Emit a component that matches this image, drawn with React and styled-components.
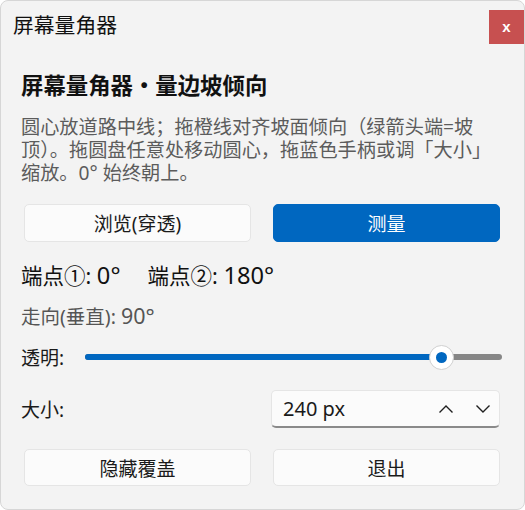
import React from "react";
import styled, { createGlobalStyle } from "styled-components";

const Global = createGlobalStyle`
  html, body { margin: 0; padding: 0; background: #ffffff; }
  body { font-family: "Noto Sans", "Noto Sans CJK SC", sans-serif; }
  * { box-sizing: border-box; }
`;

const Window = styled.div`
  width: 525px;
  height: 510px;
  background: #f3f3f3;
  border: 1px solid #d6d6d6;
  border-radius: 8px;
  display: flex;
  flex-direction: column;
  overflow: hidden;
  color: #1a1a1a;
`;

const TitleBar = styled.div`
  display: flex;
  align-items: flex-start;
  justify-content: space-between;
  padding: 9px 0 0 12px;
  height: 44px;
`;

const TitleText = styled.div`
  font-size: 20.8px;
  line-height: 28px;
  color: #111;
  font-family: "Noto Sans CJK SC", sans-serif;
`;

const CloseButton = styled.div`
  width: 35px;
  height: 34px;
  background: #c75050;
  color: #fff;
  display: flex;
  align-items: center;
  justify-content: center;
  font-family: "Liberation Sans", sans-serif;
  font-weight: bold;
  font-size: 15px;
  line-height: 1;
  padding-bottom: 2px;
`;

const Content = styled.div`
  display: flex;
  flex-direction: column;
  padding: 0 20px;
`;

const Heading = styled.div`
  margin-top: 26px;
  font-size: 22.4px;
  line-height: 30px;
  font-weight: bold;
  color: #111;
`;

const Description = styled.div`
  margin-top: 14px;
  font-size: 19.2px;
  line-height: 23px;
  color: #5c5c5c;
  height: 69px;
`;

const ButtonRow = styled.div`
  display: grid;
  grid-template-columns: 1fr 1fr;
  gap: 22px;
  margin: ${(p) => p.$mt}px 4px 0 3px;
`;

const Button = styled.div`
  height: ${(p) => p.$h}px;
  border-radius: 5px;
  display: flex;
  align-items: center;
  justify-content: center;
  font-size: 19px;
  background: ${(p) => (p.$primary ? "#0067c0" : "#fbfbfb")};
  color: ${(p) => (p.$primary ? "#ffffff" : "#1a1a1a")};
  border: 1px solid ${(p) => (p.$primary ? "#0067c0" : "#e5e5e5")};
`;

const Readings = styled.div`
  margin-top: 19px;
  display: flex;
  gap: 27px;
  font-size: 21.5px;
  line-height: 30px;
  height: 30px;
  color: #111;
`;

const Number = styled.span`
  font-size: 1.1em;
  line-height: 1;
`;

const Strike = styled.div`
  margin-top: 13px;
  font-size: 19.5px;
  line-height: 26px;
  height: 26px;
  color: #555;
`;

const FieldRow = styled.div`
  display: flex;
  align-items: center;
  margin-top: ${(p) => p.$mt}px;
  height: ${(p) => p.$h}px;
`;

const FieldLabel = styled.div`
  width: ${(p) => p.$w}px;
  font-size: 19px;
  color: #1a1a1a;
  flex: none;
`;

const Slider = styled.div`
  position: relative;
  flex: 1;
  height: 6px;
  border-radius: 3px;
  background: #868686;
  margin-right: 2px;
`;

const SliderFill = styled.div`
  height: 100%;
  border-radius: 3px;
  background: #0067c0;
`;

const Thumb = styled.div`
  position: absolute;
  top: 50%;
  width: 25px;
  height: 25px;
  margin: -12.5px 0 0 -12.5px;
  border-radius: 50%;
  background: #ffffff;
  border: 1px solid #d0d0d0;
  display: flex;
  align-items: center;
  justify-content: center;
  &::after {
    content: "";
    width: 11px;
    height: 11px;
    border-radius: 50%;
    background: #0067c0;
  }
`;

const Spin = styled.div`
  margin-left: auto;
  width: 229px;
  height: 38px;
  margin-right: 4px;
  border-radius: 5px;
  background: #fbfbfb;
  border: 1px solid #e5e5e5;
  border-bottom: 2px solid #8a8a8a;
  display: flex;
  align-items: center;
  padding: 0 8px 0 11px;
`;

const SpinValue = styled.div`
  flex: 1;
  font-size: 20px;
  color: #1a1a1a;
`;

const Arrows = styled.div`
  display: flex;
  gap: 21px;
  align-items: center;
`;

const Chevron = ({ up }) => (
  <svg width="16" height="10" viewBox="0 0 16 10">
    <path
      d={up ? "M1.5 8.5 L8 2 L14.5 8.5" : "M1.5 1.5 L8 8 L14.5 1.5"}
      fill="none"
      stroke="#1f1f1f"
      strokeWidth="1.4"
    />
  </svg>
);

export default function App() {
  const opacity = 0.856;
  return (
    <>
      <Global />
      <Window>
        <TitleBar>
          <TitleText>屏幕量角器</TitleText>
          <CloseButton>x</CloseButton>
        </TitleBar>
        <Content>
          <Heading>屏幕量角器・量边坡倾向</Heading>
          <Description>
            圆心放道路中线；拖橙线对齐坡面倾向（绿箭头端=坡顶）。拖圆盘任意处移动圆心，拖蓝色手柄或调「大小」缩放。0° 始终朝上。
          </Description>
          <ButtonRow $mt={20}>
            <Button $h={38}>浏览(穿透)</Button>
            <Button $h={38} $primary>测量</Button>
          </ButtonRow>
          <Readings>
            <span>端点①: <Number>0°</Number></span>
            <span>端点②: <Number>180°</Number></span>
          </Readings>
          <Strike>走向(垂直): <Number>90°</Number></Strike>
          <FieldRow $mt={12} $h={30}>
            <FieldLabel $w={64}>透明:</FieldLabel>
            <Slider>
              <SliderFill style={{ width: `${opacity * 100}%` }} />
              <Thumb style={{ left: `${opacity * 100}%` }} />
            </Slider>
          </FieldRow>
          <FieldRow $mt={18} $h={38}>
            <FieldLabel $w={80}>大小:</FieldLabel>
            <Spin>
              <SpinValue>240 px</SpinValue>
              <Arrows>
                <Chevron up />
                <Chevron />
              </Arrows>
            </Spin>
          </FieldRow>
          <ButtonRow $mt={21}>
            <Button $h={37}>隐藏覆盖</Button>
            <Button $h={37}>退出</Button>
          </ButtonRow>
        </Content>
      </Window>
    </>
  );
}
